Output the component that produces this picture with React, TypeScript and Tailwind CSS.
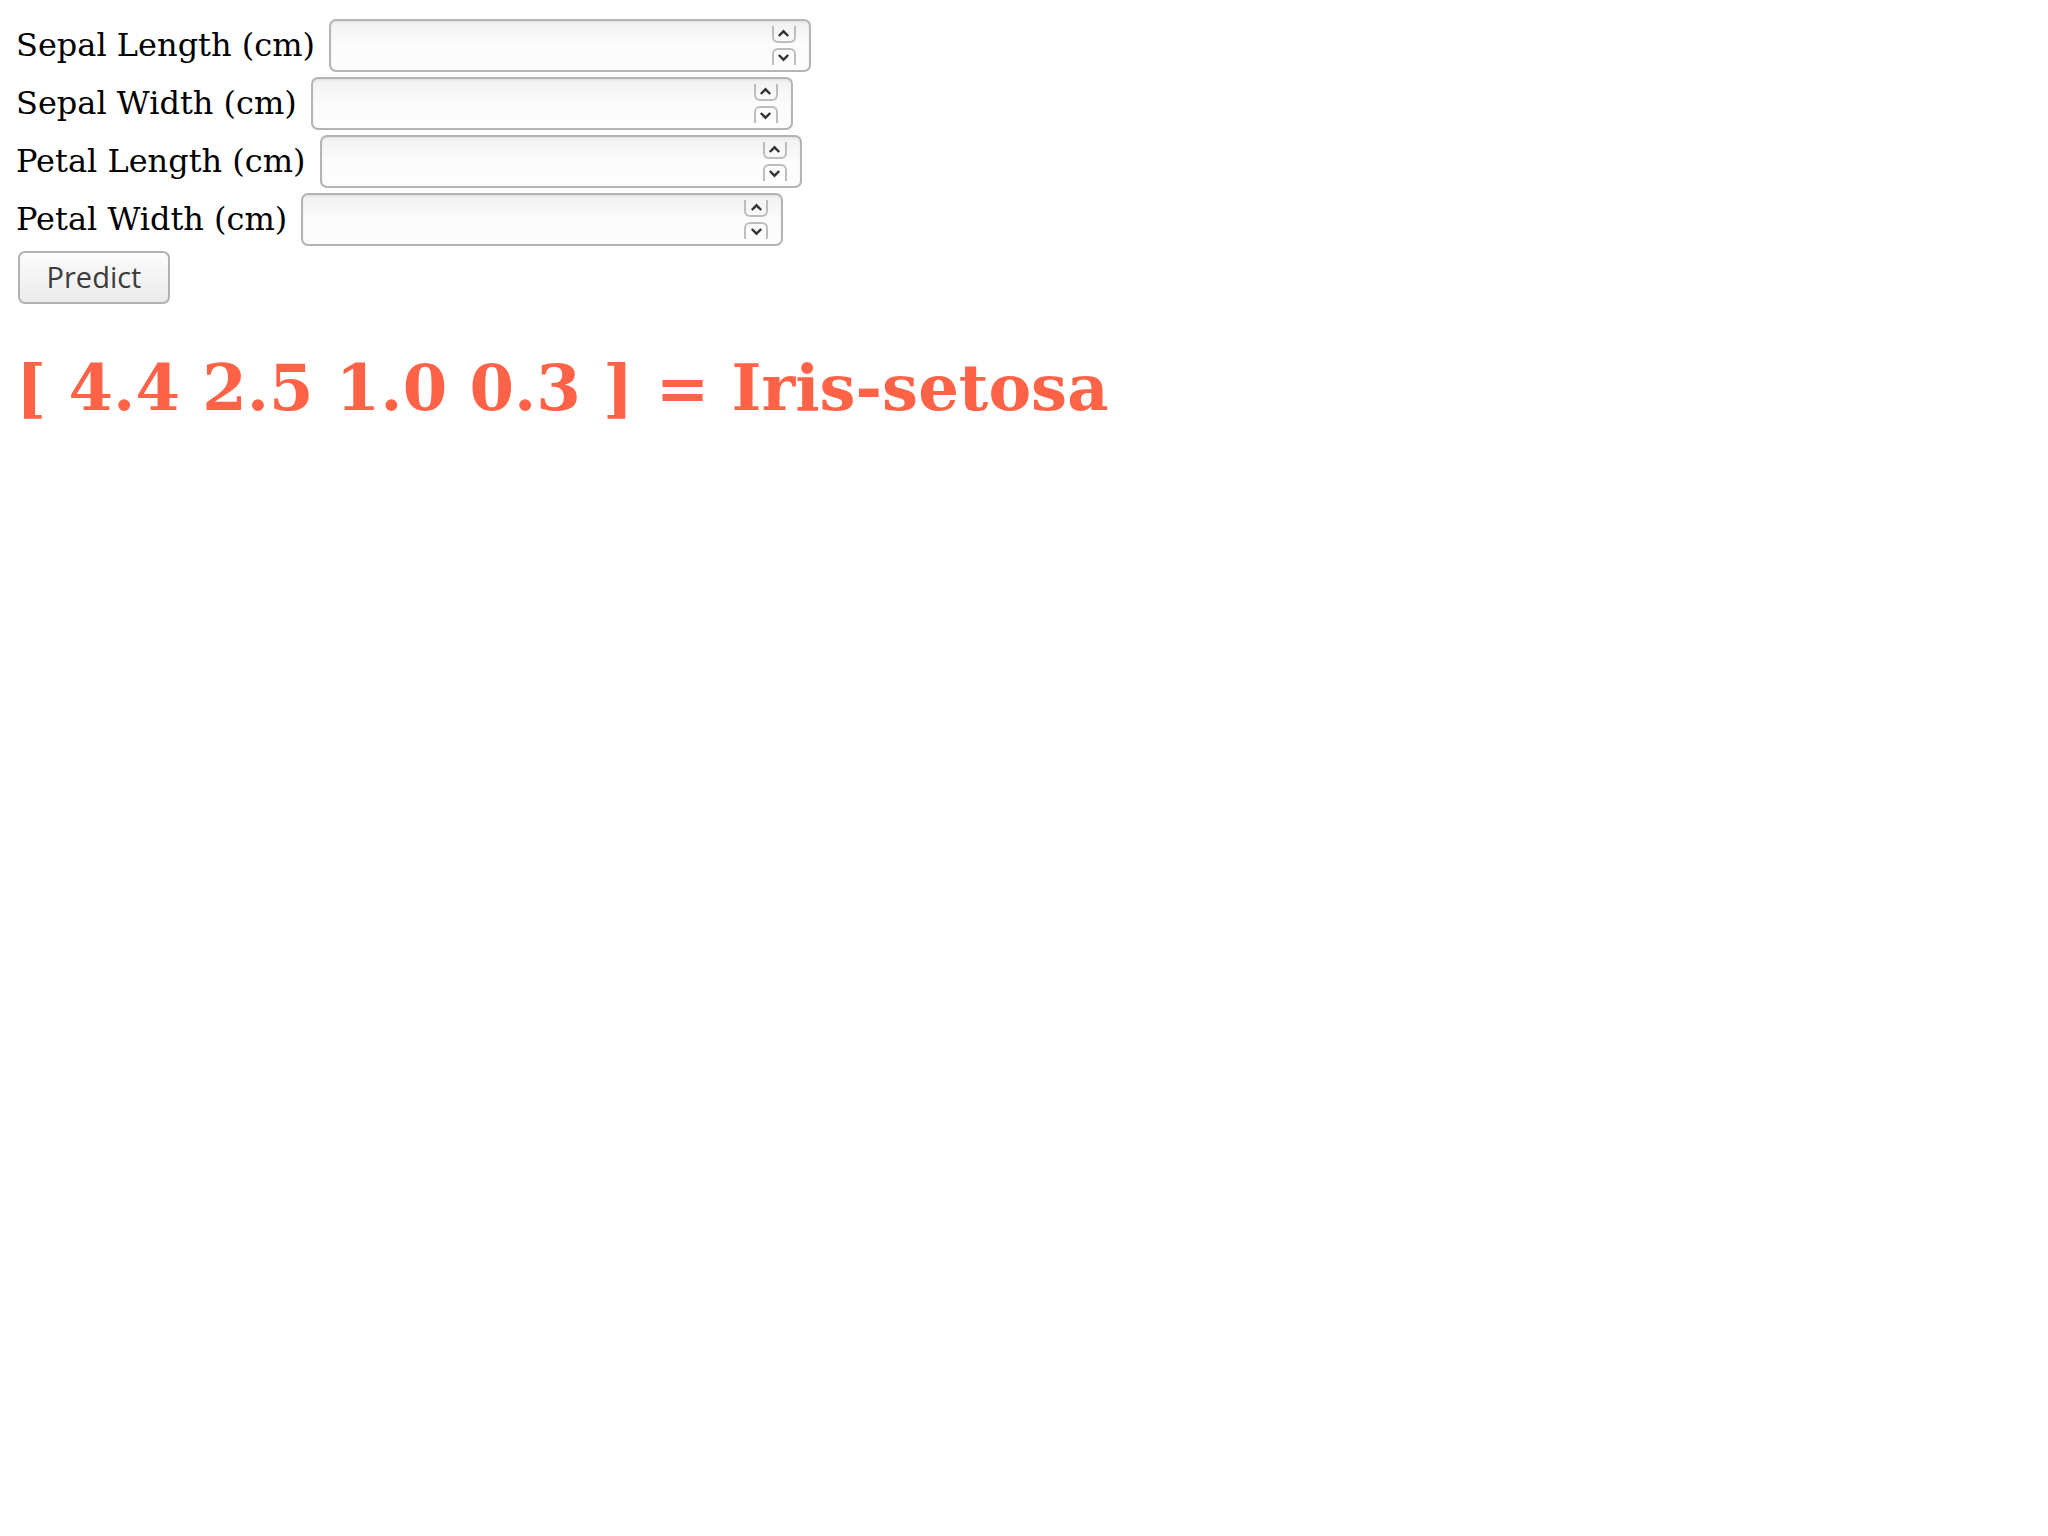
import React from "react";

const rows = ["Sepal Length (cm)", "Sepal Width (cm)", "Petal Length (cm)", "Petal Width (cm)"];

function Spinner() {
  return (
    <div className="flex flex-col gap-[5px] mr-[13px]">
      <div className="w-[24px] h-[17px] border-x-2 border-b-2 border-[#bdbdbd] rounded-b-[6px] flex items-center justify-center">
        <svg width="13" height="9" viewBox="0 0 13 9">
          <path d="M1.8 7 L6.5 2.3 L11.2 7" fill="none" stroke="#333333" strokeWidth="2.4" />
        </svg>
      </div>
      <div className="w-[24px] h-[17px] border-x-2 border-t-2 border-[#bdbdbd] rounded-t-[6px] flex items-center justify-center">
        <svg width="13" height="9" viewBox="0 0 13 9">
          <path d="M1.8 2 L6.5 6.7 L11.2 2" fill="none" stroke="#333333" strokeWidth="2.4" />
        </svg>
      </div>
    </div>
  );
}

export default function App() {
  return (
    <div className="bg-white min-h-[1536px] pt-[16px] px-[16px]">
      <div className="flex flex-col">
        {rows.map((r) => (
          <div key={r} className="h-[58px] flex items-center">
            <span className="text-[32px] leading-[37px] text-black" style={{ fontFamily: '"DejaVu Serif", serif' }}>
              {r}
            </span>
            <div className="ml-[14px] w-[482px] h-[53px] rounded-[7px] border-2 border-[#b4b4b4] bg-gradient-to-b from-[#f1f1f1] via-[#fcfcfc] to-[#fdfdfd] shadow-[inset_0_1px_2px_rgba(0,0,0,0.08)] flex items-center justify-end">
              <Spinner />
            </div>
          </div>
        ))}
        <div className="h-[58px] flex items-center">
          <button
            className="ml-[2px] w-[152px] h-[53px] rounded-[7px] border-2 border-[#b2b2b2] bg-gradient-to-b from-[#fcfcfc] to-[#ebebeb] text-[#3c3c3c] text-[29px] leading-none flex items-center justify-center pb-[2px]"
            style={{ fontFamily: '"Open Sans", sans-serif' }}
          >
            Predict
          </button>
        </div>
      </div>
      <h1
        className="mt-[44px] text-[64px] font-bold text-[#ff6347] leading-[75px] whitespace-pre"
        style={{ fontFamily: '"DejaVu Serif", serif' }}
      >
        [ 4.4 2.5 1.0 0.3 ] = Iris-setosa
      </h1>
    </div>
  );
}
